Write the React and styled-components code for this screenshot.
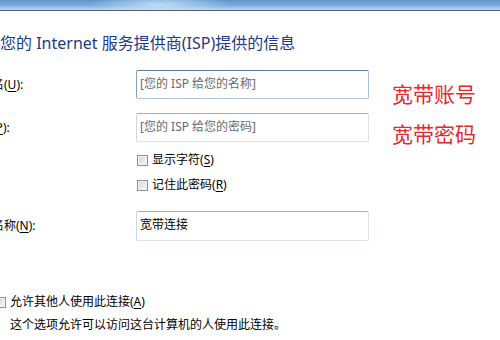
import React from 'react';
import styled, { createGlobalStyle } from 'styled-components';

const GlobalStyle = createGlobalStyle`
  html, body {
    margin: 0;
    padding: 0;
    background: #fff;
  }
  body {
    font-family: "Noto Sans", "Noto Sans CJK SC", sans-serif;
  }
`;

const FONT = `"Noto Sans", "Noto Sans CJK SC", sans-serif`;

function Checkbox({ label, keyChar }) {
  return (
    <CheckRow>
      <CheckBox />
      <CheckLabel>
        {label}(<u>{keyChar}</u>)
      </CheckLabel>
    </CheckRow>
  );
}

export default function App() {
  return (
    <Page>
      <GlobalStyle />
      <TitleBar />
      <Body>
        <Heading>您的 Internet 服务提供商(ISP)提供的信息</Heading>
        <Form>
          <FieldRow $top={17}>
            <Label>用户名(<u>U</u>):</Label>
            <TextBox $focused readOnly placeholder="[您的 ISP 给您的名称]" />
            <Note $offset={11}>宽带账号</Note>
          </FieldRow>
          <FieldRow $top={14}>
            <Label>密码(<u>P</u>):</Label>
            <TextBox readOnly placeholder="[您的 ISP 给您的密码]" />
            <Note $offset={8}>宽带密码</Note>
          </FieldRow>
          <OptionGroup>
            <Checkbox label="显示字符" keyChar="S" />
            <Checkbox label="记住此密码" keyChar="R" />
          </OptionGroup>
          <FieldRow $top={18} $tall>
            <Label>连接名称(<u>N</u>):</Label>
            <TextBox $tall readOnly value="宽带连接" />
          </FieldRow>
        </Form>
        <ShareBlock>
          <CheckRow>
            <CheckBox />
            <CheckLabel>
              允许其他人使用此连接(<u>A</u>)
            </CheckLabel>
          </CheckRow>
          <Hint>这个选项允许可以访问这台计算机的人使用此连接。</Hint>
        </ShareBlock>
      </Body>
    </Page>
  );
}

const Page = styled.div`
  width: 500px;
  height: 340px;
  overflow: hidden;
  background: #fff;
`;

const TitleBar = styled.div`
  height: 10px;
  border-bottom: 1px solid #4f5f6d;
  background:
    radial-gradient(ellipse 70px 12px at 160px 45%, rgba(205, 230, 250, 0.8), rgba(205, 230, 250, 0)),
    linear-gradient(#5f96cc, #7cade0 55%, #bcd8f4);
`;

const Body = styled.div`
  display: flex;
  flex-direction: column;
`;

const Heading = styled.h1`
  margin: 22px 0 0;
  font-family: ${FONT};
  font-size: 16px;
  font-weight: 400;
  line-height: 20px;
  color: #1c3a86;
  white-space: nowrap;
`;

const Form = styled.div`
  display: flex;
  flex-direction: column;
  margin-left: -32px;
`;

/* row height is fixed by the text box; the red note may hang below it */
const FieldRow = styled.div`
  display: grid;
  grid-template-columns: 168px 233px auto;
  grid-template-rows: ${(p) => (p.$tall ? 30 : 29)}px;
  align-items: start;
  margin-top: ${(p) => p.$top}px;
`;

const Label = styled.div`
  align-self: center;
  font-family: ${FONT};
  font-size: 12px;
  line-height: 16px;
  color: #000;
  white-space: nowrap;

  & u {
    text-underline-offset: 2px;
  }
`;

const TextBox = styled.input`
  box-sizing: border-box;
  width: 233px;
  height: ${(p) => (p.$tall ? 30 : 29)}px;
  margin: 0;
  padding: ${(p) => (p.$tall ? '2px 3px 6px' : '3px 3px 5px')};
  border: 1px solid ${(p) => (p.$focused ? '#a9c4da' : '#dde2e8')};
  border-top-color: ${(p) => (p.$focused ? '#5d7f9c' : '#abadb3')};
  border-left-color: ${(p) => (p.$focused ? '#87a3bb' : '#d3d7dd')};
  border-radius: 2px;
  background: #fff;
  outline: none;
  font-family: ${FONT};
  font-size: 12px;
  color: #000;

  &::placeholder {
    color: #6a6a6a;
    opacity: 1;
  }
`;

const Note = styled.div`
  margin: ${(p) => p.$offset}px 0 0 23px;
  font-family: "Noto Sans CJK SC", sans-serif;
  font-size: 21px;
  line-height: 24px;
  color: #e4282d;
  white-space: nowrap;
`;

const OptionGroup = styled.div`
  display: flex;
  flex-direction: column;
  gap: 9px;
  margin-top: 10px;
  padding-left: 169px;
`;

const CheckRow = styled.div`
  display: flex;
  align-items: center;
  gap: 4px;
  height: 16px;
`;

const CheckBox = styled.span`
  box-sizing: border-box;
  flex: none;
  width: 11px;
  height: 11px;
  border: 1px solid #8e8f8f;
  box-shadow: inset 0 0 0 1px #f4f4f4;
  background: linear-gradient(135deg, #d2d2d2, #eeeeee 70%, #f8f8f8);
`;

const CheckLabel = styled.span`
  font-family: ${FONT};
  font-size: 12px;
  line-height: 16px;
  color: #000;
  white-space: nowrap;

  & u {
    text-underline-offset: 2px;
  }
`;

const ShareBlock = styled.div`
  display: flex;
  flex-direction: column;
  margin-top: 53px;
  margin-left: -5px;
`;

const Hint = styled.div`
  margin: 7px 0 0 15px;
  font-family: ${FONT};
  font-size: 12px;
  line-height: 16px;
  color: #000;
  white-space: nowrap;
`;
